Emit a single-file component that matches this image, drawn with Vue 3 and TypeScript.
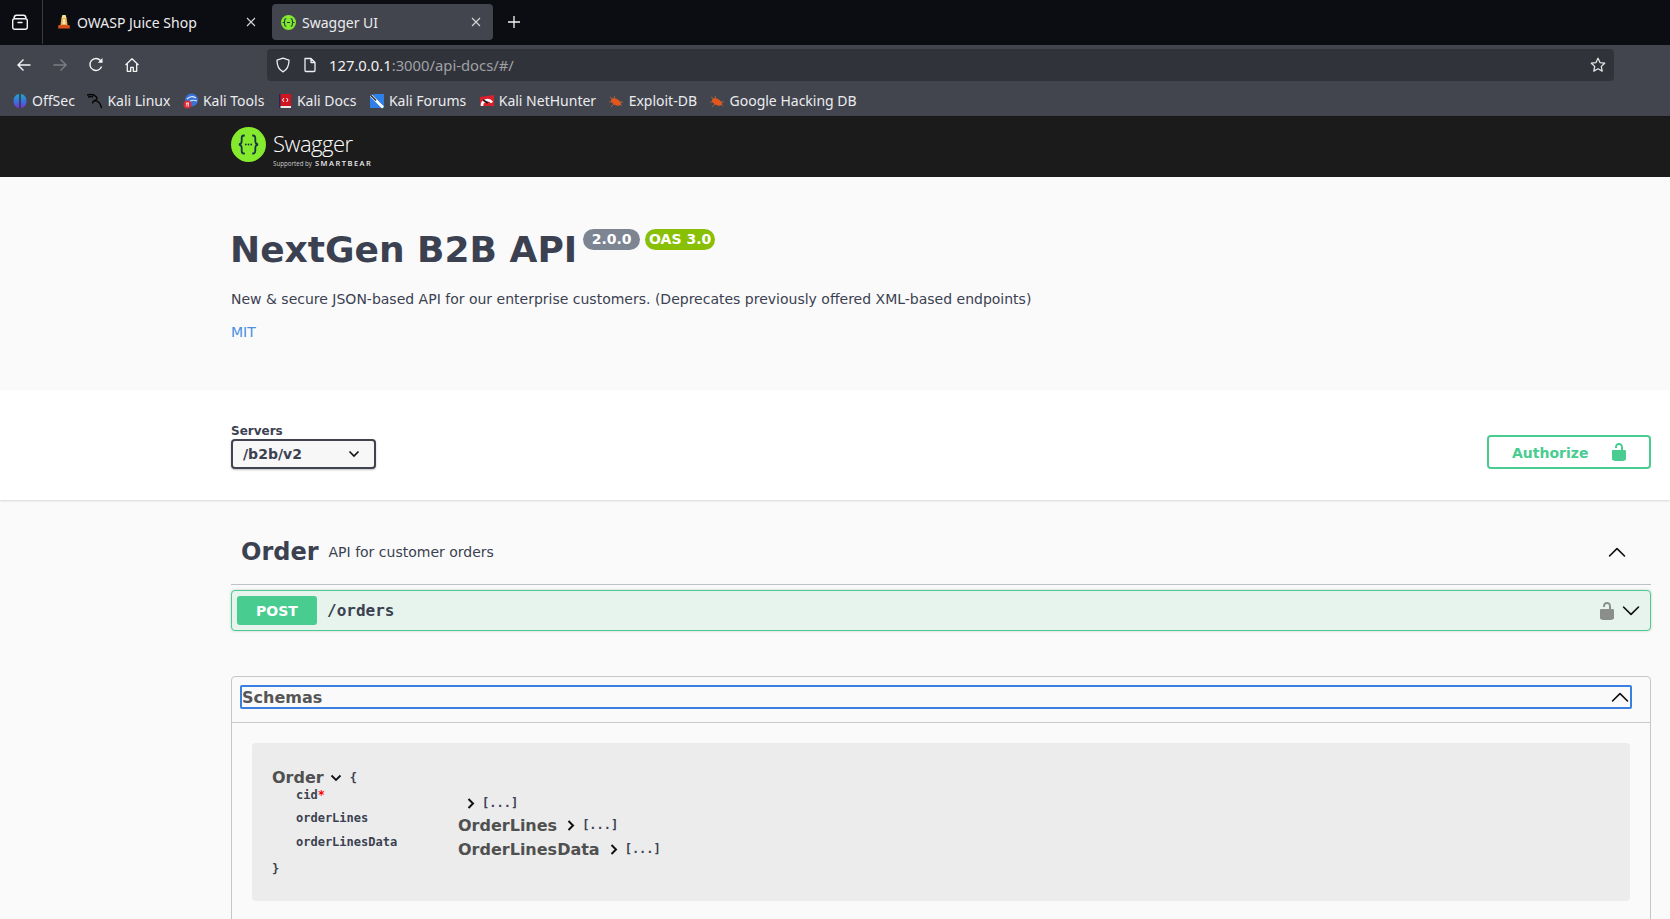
<script setup lang="ts">
const bookmarks = [
  { name: 'OffSec', icon: 'offsec' },
  { name: 'Kali Linux', icon: 'linux' },
  { name: 'Kali Tools', icon: 'tools' },
  { name: 'Kali Docs', icon: 'docs' },
  { name: 'Kali Forums', icon: 'forums' },
  { name: 'Kali NetHunter', icon: 'nethunter' },
  { name: 'Exploit-DB', icon: 'bug' },
  { name: 'Google Hacking DB', icon: 'bug' },
]
</script>

<template>
  <div class="page">
    <div class="tabbar">
      <div class="tabview">
        <svg width="18" height="18" viewBox="0 0 18 18" fill="none" stroke="#f4f4f5" stroke-width="1.4">
          <rect x="1.700" y="5.700" width="14.600" height="10.600" rx="2" />
          <path d="M7 9.500h4" stroke-linecap="round" />
          <path d="M3 5.600C3 3.500 4 2.200 5.500 2.200h7C14 2.200 15 3.500 15 5.600" />
        </svg>
      </div>
      <div class="tab first">
        <svg class="fav" width="14" height="16" viewBox="0 0 14 16">
          <path d="M4.500 3h5l1 8H3.500z" fill="#e8b34c" />
          <rect x="5" y="1" width="4" height="3" rx="1" fill="#f6e0a6" />
          <path d="M6 5h2l.5 5h-3z" fill="#f7e6b5" />
          <path d="M1.500 11h11l.5 3.500H1z" fill="#d8501f" />
        </svg>
        <span class="tab-title">OWASP Juice Shop</span>
        <span class="close">
          <svg width="10" height="10" viewBox="0 0 10 10" stroke="#d7d7da" stroke-width="1.100"><path d="M1 1l8 8M9 1l-8 8" /></svg>
        </span>
      </div>
      <div class="tab active">
        <svg class="fav" width="15" height="15" viewBox="0 0 14 14">
          <circle cx="7" cy="7" r="7" fill="#85ea2d" />
          <path d="M5 3.500H4.500c-.8 0-1 .5-1 1.200v1c0 .7-.3 1.100-1 1.300.7.200 1 .6 1 1.300v1c0 .7.2 1.200 1 1.200H5M9 3.500h.5c.8 0 1 .5 1 1.200v1c0 .7.3 1.100 1 1.300-.7.200-1 .6-1 1.300v1c0 .7-.2 1.200-1 1.200H9M5.500 7h3" fill="none" stroke="#173647" stroke-width="1" />
        </svg>
        <span class="tab-title">Swagger UI</span>
        <span class="close">
          <svg width="10" height="10" viewBox="0 0 10 10" stroke="#d7d7da" stroke-width="1.100"><path d="M1 1l8 8M9 1l-8 8" /></svg>
        </span>
      </div>
      <div class="newtab">
        <svg width="14" height="14" viewBox="0 0 14 14" stroke="#f4f4f5" stroke-width="1.300"><path d="M7 1v12M1 7h12" /></svg>
      </div>
    </div>

    <div class="navbar">
      <div class="navbtns">
        <svg width="16" height="16" viewBox="0 0 16 16" fill="none" stroke="#f4f4f5" stroke-width="1.400"><path d="M14.500 8H2M7.500 2.500 2 8l5.500 5.500" /></svg>
        <svg width="16" height="16" viewBox="0 0 16 16" fill="none" stroke="#7c7e85" stroke-width="1.400"><path d="M1.500 8H14M8.500 2.500 14 8l-5.500 5.500" /></svg>
        <svg width="16" height="16" viewBox="0 0 16 16" fill="none" stroke="#f4f4f5" stroke-width="1.400"><path d="M13.600 9.500A6 6 0 1 1 12.500 3.500L14 5" /><path d="M14.500 1v4.700H9.800" fill="#f4f4f5" stroke="none" /></svg>
        <svg width="16" height="16" viewBox="0 0 16 16" fill="none" stroke="#f4f4f5" stroke-width="1.300"><path d="M1.500 8 8 1.800 14.500 8M3.300 7v7.300h3.400v-4h2.600v4h3.400V7" stroke-linejoin="round" /></svg>
      </div>
      <div class="urlbar">
        <svg width="16" height="16" viewBox="0 0 16 16" fill="none" stroke="#eeeef0" stroke-width="1.300"><path d="M8 1.200 14 3.200C14 9 12.500 12.500 8 14.800 3.500 12.500 2 9 2 3.200z" stroke-linejoin="round" /></svg>
        <svg class="pageicon" width="14" height="16" viewBox="0 0 14 16" fill="none" stroke="#eeeef0" stroke-width="1.300"><path d="M2 1.500h6l4 4v8a1 1 0 0 1-1 1H3a1 1 0 0 1-1-1zM8 1.500v4h4" stroke-linejoin="round" /></svg>
        <span class="url"><span class="url-host">127.0.0.1</span>:3000/api-docs/#/</span>
        <svg class="star" width="16" height="16" viewBox="0 0 16 16" fill="none" stroke="#e4e4e6" stroke-width="1.300"><path d="M8 1.300l2 4.300 4.700.6-3.400 3.200.9 4.700L8 11.800l-4.200 2.300.9-4.700L1.300 6.200 6 5.600z" stroke-linejoin="round" /></svg>
      </div>
    </div>

    <div class="bookmarks">
      <div v-for="b in bookmarks" :key="b.name" class="bookmark" :class="'bm-' + b.icon">
        <svg width="16" height="16" viewBox="0 0 16 16">
          <template v-if="b.icon === 'offsec'">
            <defs>
              <linearGradient id="offsecGrad" x1="0" y1="0" x2="0" y2="1">
                <stop offset="0" stop-color="#24a6c8" />
                <stop offset=".55" stop-color="#3a6ee0" />
                <stop offset="1" stop-color="#7a35d2" />
              </linearGradient>
            </defs>
            <path d="M7.300 1C3.300 1.500 1.500 4.500 1.500 8s1.800 6.500 5.800 7z" fill="url(#offsecGrad)" />
            <path d="M8.700 1c4 .5 5.800 3.500 5.800 7s-1.800 6.500-5.800 7z" fill="url(#offsecGrad)" />
            <path d="M8 1v14" stroke="#2a2d36" stroke-width=".8" />
          </template>
          <template v-else-if="b.icon === 'linux'">
            <path d="M0 2c4-1 7-.5 9 1.500 2 2 .5 3.500-2 4.500 3.500-1 6.500 2 7.500 7M1 4c2-.5 4-.5 5 0M7 8c-1 .5-1.500 1.500-1 2.500" fill="none" stroke="#050505" stroke-width="1.400" />
          </template>
          <template v-else-if="b.icon === 'tools'">
            <circle cx="8.500" cy="7" r="6.500" fill="#3a72d8" />
            <path d="M4 6c3-3 6-3 9-1M6 9c2-2 5-2 8-1" fill="none" stroke="#dce8fb" stroke-width="1.100" />
            <circle cx="4.500" cy="11.500" r="4" fill="#d92a3a" />
            <path d="M3 10h3M3.800 10v3.500M5.300 10v3.500" stroke="#fff" stroke-width=".8" fill="none" />
          </template>
          <template v-else-if="b.icon === 'docs'">
            <rect x="2" y="1" width="12" height="13" fill="#d3141e" />
            <rect x="2" y="13" width="12" height="2" fill="#e8e8ea" />
            <rect x="2" y="1" width="1.500" height="14" fill="#1f2a5c" />
            <path d="M7 5 5.500 7 7 9M9.500 5 11 7 9.500 9" fill="none" stroke="#fff" stroke-width="1" />
          </template>
          <template v-else-if="b.icon === 'forums'">
            <path d="M5 1h10v14H1V4z" fill="#2e7fe8" />
            <path d="M2 2.500 14 14.500" stroke="#fff" stroke-width="2.600" />
            <path d="M2 2.500 7 7.500" stroke="#20242c" stroke-width="1.400" />
          </template>
          <template v-else-if="b.icon === 'nethunter'">
            <path d="M1 4 15 2v11H1z" fill="#d8212c" />
            <path d="M3 13a5.500 5.500 0 0 1 10-3.500" fill="none" stroke="#fff" stroke-width="2.600" />
            <path d="M4 7 9 10" stroke="#1a1a1f" stroke-width="1.500" />
          </template>
          <template v-else>
            <ellipse cx="7" cy="9" rx="5.500" ry="3" transform="rotate(28 7 9)" fill="#e4561b" />
            <path d="M1 4l3 2M5 3l1 3M0 9l3 0M2 14l3-3M13 13l-2-2M14 9l-3 0" stroke="#c96a3a" stroke-width=".7" fill="none" />
          </template>
        </svg>
        <span>{{ b.name }}</span>
      </div>
    </div>

    <div class="topbar">
      <div class="logo">
        <svg width="35" height="35" viewBox="0 0 35 35">
          <circle cx="17.500" cy="17.500" r="17.500" fill="#85ea2d" />
          <path d="M13.800 8.500h-.9c-1.500 0-2.200.9-2.200 2.500v3.200c0 1.900-1 2.900-2.700 3.300 1.700.4 2.700 1.400 2.700 3.300V24c0 1.600.7 2.500 2.200 2.500h.9M21.200 8.500h.9c1.500 0 2.200.9 2.200 2.500v3.200c0 1.900 1 2.900 2.700 3.300-1.700.4-2.700 1.400-2.700 3.300V24c0 1.600-.7 2.500-2.200 2.500h-.9" fill="none" stroke="#173647" stroke-width="1.800" />
          <circle cx="14.800" cy="17.500" r=".9" fill="#173647" />
          <circle cx="17.500" cy="17.500" r=".9" fill="#173647" />
          <circle cx="20.200" cy="17.500" r=".9" fill="#173647" />
        </svg>
        <div class="logo-text">
          <div class="logo-name">Swagger</div>
          <div class="logo-sub"><span class="sup">Supported by</span><span class="bear">SMARTBEAR</span></div>
        </div>
      </div>
    </div>

    <section class="info">
      <div class="title-row">
        <h1>NextGen B2B API</h1>
        <span class="badge version">2.0.0</span>
        <span class="badge oas">OAS 3.0</span>
      </div>
      <p class="desc">New &amp; secure JSON-based API for our enterprise customers. (Deprecates previously offered XML-based endpoints)</p>
      <a class="license">MIT</a>
    </section>

    <section class="schemes">
      <div class="servers">
        <div class="servers-label">Servers</div>
        <div class="select">
          <span>/b2b/v2</span>
          <svg width="12" height="8" viewBox="0 0 12 8" fill="none" stroke="#111" stroke-width="1.600"><path d="M1.500 1.500 6 6l4.500-4.500" /></svg>
        </div>
      </div>
      <div class="authorize">
        <span class="auth-text">Authorize</span>
        <svg width="20" height="20" viewBox="0 0 20 20" fill="#49cc90"><path d="M15.800 8H14V5.600C14 2.703 12.665 1 10 1 7.334 1 6 2.703 6 5.600V6h2v-.801C8 3.754 8.797 3 10 3c1.203 0 2 .754 2 2.199V8H4c-.553 0-1 .646-1 1.199V17c0 .549.428 1.139.951 1.307l1.197.387C5.672 18.861 6.450 19 7 19h6c.55 0 1.327-.139 1.852-.307l1.196-.387c.524-.167.952-.757.952-1.306V9.199C17 8.646 16.352 8 15.800 8z" /></svg>
      </div>
    </section>

    <main class="content">
      <div class="tag">
        <span class="tag-name">Order</span>
        <span class="tag-desc">API for customer orders</span>
        <svg class="tag-arrow" width="20" height="20" viewBox="0 0 20 20"><path d="M17.500 14.800a.9.900 0 0 1-.6-.2L10 7.700l-6.900 6.900a.9.900 0 0 1-1.200-1.200l7.500-7.500a.9.900 0 0 1 1.200 0l7.500 7.500a.9.900 0 0 1-.6 1.400z" fill="#111" /></svg>
      </div>

      <div class="opblock">
        <span class="method">POST</span>
        <span class="path">/orders</span>
        <svg class="oplock" width="20" height="20" viewBox="0 0 20 20" fill="#8b8f8c"><path d="M15.800 8H14V5.600C14 2.703 12.665 1 10 1 7.334 1 6 2.703 6 5.600V6h2v-.801C8 3.754 8.797 3 10 3c1.203 0 2 .754 2 2.199V8H4c-.553 0-1 .646-1 1.199V17c0 .549.428 1.139.951 1.307l1.197.387C5.672 18.861 6.450 19 7 19h6c.55 0 1.327-.139 1.852-.307l1.196-.387c.524-.167.952-.757.952-1.306V9.199C17 8.646 16.352 8 15.800 8z" /></svg>
        <svg class="opchev" width="20" height="20" viewBox="0 0 20 20"><path d="M17.500 5.200a.9.900 0 0 0-.6.2L10 12.300 3.100 5.400a.9.900 0 0 0-1.200 1.200l7.500 7.500a.9.900 0 0 0 1.200 0l7.500-7.500a.9.900 0 0 0-.6-1.400z" fill="#111" /></svg>
      </div>

      <div class="models">
        <div class="models-head">
          <div class="focus">
            <span class="models-title">Schemas</span>
            <svg width="20" height="20" viewBox="0 0 20 20"><path d="M17.500 14.800a.9.900 0 0 1-.6-.2L10 7.700l-6.900 6.900a.9.900 0 0 1-1.200-1.200l7.500-7.500a.9.900 0 0 1 1.200 0l7.500 7.500a.9.900 0 0 1-.6 1.400z" fill="#111" /></svg>
          </div>
        </div>
        <div class="models-body">
          <div class="model-box">
            <div class="model-head">
              <span class="model-title">Order</span>
              <svg width="12" height="8" viewBox="0 0 12 8" fill="none" stroke="#111" stroke-width="1.800"><path d="M1.500 1.500 6 6l4.500-4.500" /></svg>
              <span class="brace">{</span>
            </div>
            <div class="row r1">
              <div class="key">cid<span class="req">*</span></div>
              <div class="val indent"><svg class="chev" width="8" height="11" viewBox="0 0 8 11" fill="none" stroke="#111" stroke-width="2"><path d="M1.500 1 6 5.500 1.500 10" /></svg><span class="brk">[...]</span></div>
            </div>
            <div class="row r2">
              <div class="key">orderLines</div>
              <div class="val"><span class="model-title">OrderLines</span><svg class="chev" width="8" height="11" viewBox="0 0 8 11" fill="none" stroke="#111" stroke-width="2"><path d="M1.500 1 6 5.500 1.500 10" /></svg><span class="brk">[...]</span></div>
            </div>
            <div class="row r3">
              <div class="key">orderLinesData</div>
              <div class="val"><span class="model-title">OrderLinesData</span><svg class="chev" width="8" height="11" viewBox="0 0 8 11" fill="none" stroke="#111" stroke-width="2"><path d="M1.500 1 6 5.500 1.500 10" /></svg><span class="brk">[...]</span></div>
            </div>
            <div class="brace end">}</div>
          </div>
        </div>
      </div>
    </main>
  </div>
</template>

<style>
html, body { margin: 0; background: #fafafa; overflow: hidden; }
</style>

<style scoped>
.page {
  width: 1670px;
  height: 919px;
  overflow: hidden;
  display: flex;
  flex-direction: column;
  font-family: "DejaVu Sans", sans-serif;
  color: #3b4151;
  background: #fafafa;
}
.tabbar {
  height: 45px;
  flex: none;
  background: #0c0d12;
  display: flex;
  align-items: flex-start;
  font-family: "Noto Sans", sans-serif;
  font-size: 14px;
  color: #ececee;
}
.tabview {
  width: 42px;
  height: 44px;
  border-right: 1px solid #3a3b40;
  display: flex;
  align-items: center;
  justify-content: flex-start;
  flex: none;
}
.tabview svg { margin-left: 11px; }
.tab {
  width: 221px;
  height: 36px;
  margin-top: 4px;
  padding: 0 12px 0 9px;
  box-sizing: border-box;
  border-radius: 4px;
  display: flex;
  align-items: center;
  flex: none;
}
.tab.first { margin-left: 5px; padding-right: 13px; }
.tab.active { background: #42454e; margin-left: 3px; }
.fav { flex: none; }
.tab-title { margin-left: 6px; flex: 1; white-space: nowrap; }
.close { display: flex; }
.newtab { margin-left: 14px; margin-top: 15px; display: flex; }
.navbar {
  height: 36px;
  flex: none;
  background: #42454e;
  display: flex;
  align-items: flex-end;
}
.navbtns {
  width: 267px;
  height: 32px;
  padding-left: 16px;
  box-sizing: border-box;
  display: flex;
  align-items: center;
  gap: 20px;
  flex: none;
}
.urlbar {
  width: 1347px;
  height: 32px;
  background: #31333a;
  border-radius: 4px;
  display: flex;
  align-items: center;
  padding: 0 8px;
  box-sizing: border-box;
  flex: none;
  font-family: "Noto Sans", sans-serif;
  font-size: 14.800px;
  color: #a0a1a6;
}
.pageicon { margin-left: 12px; }
.url { margin-left: 12px; flex: 1; }
.url-host { color: #f0f0f2; }
.bookmarks {
  height: 36px;
  flex: none;
  box-sizing: border-box;
  background: #42454e;
  border-bottom: 1px solid #16171a;
  display: flex;
  align-items: center;
  padding: 4px 0 0 12px;
  gap: 12.500px;
  font-family: "Noto Sans", sans-serif;
  font-size: 14px;
  color: #ececee;
}
.bookmark { display: flex; align-items: center; gap: 4px; white-space: nowrap; }
.topbar {
  height: 60px;
  flex: none;
  box-sizing: border-box;
  background: #1b1b1b;
  padding: 10px 0 0 231px;
}
.logo { display: flex; align-items: flex-start; gap: 7px; color: #fff; }
.logo-text { display: flex; flex-direction: column; padding-top: 3px; }
.logo-name { font-family: "Open Sans", sans-serif; font-weight: 300; font-size: 22px; line-height: 26px; letter-spacing: -0.500px; }
.logo-sub { display: flex; align-items: center; gap: 3px; line-height: 9px; margin-top: 3px; }
.sup { font-family: "Open Sans", sans-serif; font-size: 6.200px; color: #ccc; }
.bear { font-family: "Open Sans", sans-serif; font-size: 7.500px; font-weight: 600; letter-spacing: 1.500px; color: #eee; }
.info {
  height: 213px;
  flex: none;
  box-sizing: border-box;
  padding: 51px 0 0 231px;
  background: #fafafa;
}
.title-row { display: flex; align-items: flex-start; height: 44px; }
h1 { margin: 0 0 0 -1px; font-size: 36px; line-height: 44px; font-weight: 700; white-space: nowrap; }
.badge {
  height: 21px;
  line-height: 21px;
  border-radius: 57px;
  padding: 0 8.500px;
  margin-top: 1px;
  color: #fff;
  font-size: 14px;
  font-weight: 700;
  margin-left: 5px;
}
.version { background: #7d8492; margin-left: 6px; }
.oas { background: #89bf04; padding: 0 4px; }
.desc { margin: 17px 0 0; font-size: 14px; line-height: 20px; white-space: nowrap; }
.license { display: block; margin-top: 13px; font-size: 14px; line-height: 20px; color: #4990e2; }
.schemes {
  height: 110px;
  flex: none;
  box-sizing: border-box;
  background: #fff;
  box-shadow: 0 1px 2px rgba(0, 0, 0, .15);
  padding: 34px 19px 0 231px;
  display: flex;
  justify-content: space-between;
  position: relative;
}
.servers-label { font-size: 12px; font-weight: 700; line-height: 15px; }
.select {
  width: 145px;
  height: 30px;
  box-sizing: border-box;
  border: 2px solid #41444e;
  border-radius: 4px;
  background: #f7f7f7;
  box-shadow: 0 1px 2px rgba(0, 0, 0, .25);
  padding: 0 14px 0 10px;
  display: flex;
  align-items: center;
  justify-content: space-between;
  font-size: 14px;
  font-weight: 700;
}
.authorize {
  width: 164px;
  height: 34px;
  margin-top: 11px;
  box-sizing: border-box;
  border: 2px solid #49cc90;
  border-radius: 4px;
  color: #49cc90;
  font-size: 14px;
  font-weight: 700;
  display: flex;
  align-items: center;
  padding: 0 20px 0 23px;
  justify-content: space-between;
}
.auth-text { padding-top: 1px; }
.content {
  flex: 1;
  margin-left: 231px;
  width: 1420px;
  display: flex;
  flex-direction: column;
  min-height: 0;
}
.tag {
  height: 85px;
  flex: none;
  box-sizing: border-box;
  padding: 19px 24px 0 10px;
  border-bottom: 1px solid #bfc1c4;
  display: flex;
  align-items: center;
}
.tag-name { font-size: 24px; font-weight: 700; }
.tag-desc { font-size: 14px; margin-left: 10px; flex: 1; }
.opblock {
  margin-top: 5px;
  height: 41px;
  flex: none;
  box-sizing: border-box;
  border: 1px solid #49cc90;
  border-radius: 4px;
  background: #e6f4ed;
  box-shadow: 0 0 3px rgba(0, 0, 0, .19);
  display: flex;
  align-items: center;
  padding: 0 9px 0 5px;
}
.method {
  width: 80px;
  height: 29px;
  line-height: 30px;
  border-radius: 3px;
  background: #49cc90;
  color: #fff;
  font-size: 14px;
  font-weight: 700;
  text-align: center;
}
.path {
  font-family: "DejaVu Sans Mono", monospace;
  font-size: 16px;
  font-weight: 600;
  margin-left: 10px;
  flex: 1;
}
.oplock { margin-right: 4px; }
.models {
  margin-top: 45px;
  flex: 1;
  min-height: 300px;
  border: 1px solid #c4c6c9;
  border-radius: 4px;
}
.models-head {
  height: 46px;
  box-sizing: border-box;
  border-bottom: 1px solid #c8cacd;
  padding: 8px 18px 0 8px;
}
.focus {
  height: 24px;
  box-sizing: border-box;
  border: 2px solid #3a80e0;
  border-radius: 2px;
  display: flex;
  align-items: center;
  justify-content: space-between;
}
.models-title { font-size: 16px; font-weight: 700; color: #555; }
.models-body { padding: 20px 20px 0; }
.model-box {
  height: 158px;
  box-sizing: border-box;
  background: #ececec;
  border-radius: 4px;
  padding: 26px 0 0 20px;
  font-family: "DejaVu Sans Mono", monospace;
  font-size: 12px;
  font-weight: 600;
}
.model-head { display: flex; align-items: center; height: 17px; margin-bottom: 2px; }
.model-title { font-family: "DejaVu Sans", sans-serif; font-size: 16px; font-weight: 700; color: #505050; }
.model-head svg { margin-left: 6px; }
.brace { margin-left: 8px; }
.brace.end { margin-left: 0; margin-top: 2.500px; line-height: 15px; }
.row { display: flex; align-items: flex-start; padding-left: 24px; height: 24px; }
.key { width: 162px; flex: none; line-height: 15px; }
.val { display: flex; align-items: center; height: 20px; margin-top: 4px; }
.val.indent { padding-left: 9px; margin-top: 5px; }
.chev { margin: 0 7px 0 10px; }
.val.indent .chev { margin-left: 0; }
.req { color: #f00; }
.r1 { height: 23px; }
</style>
